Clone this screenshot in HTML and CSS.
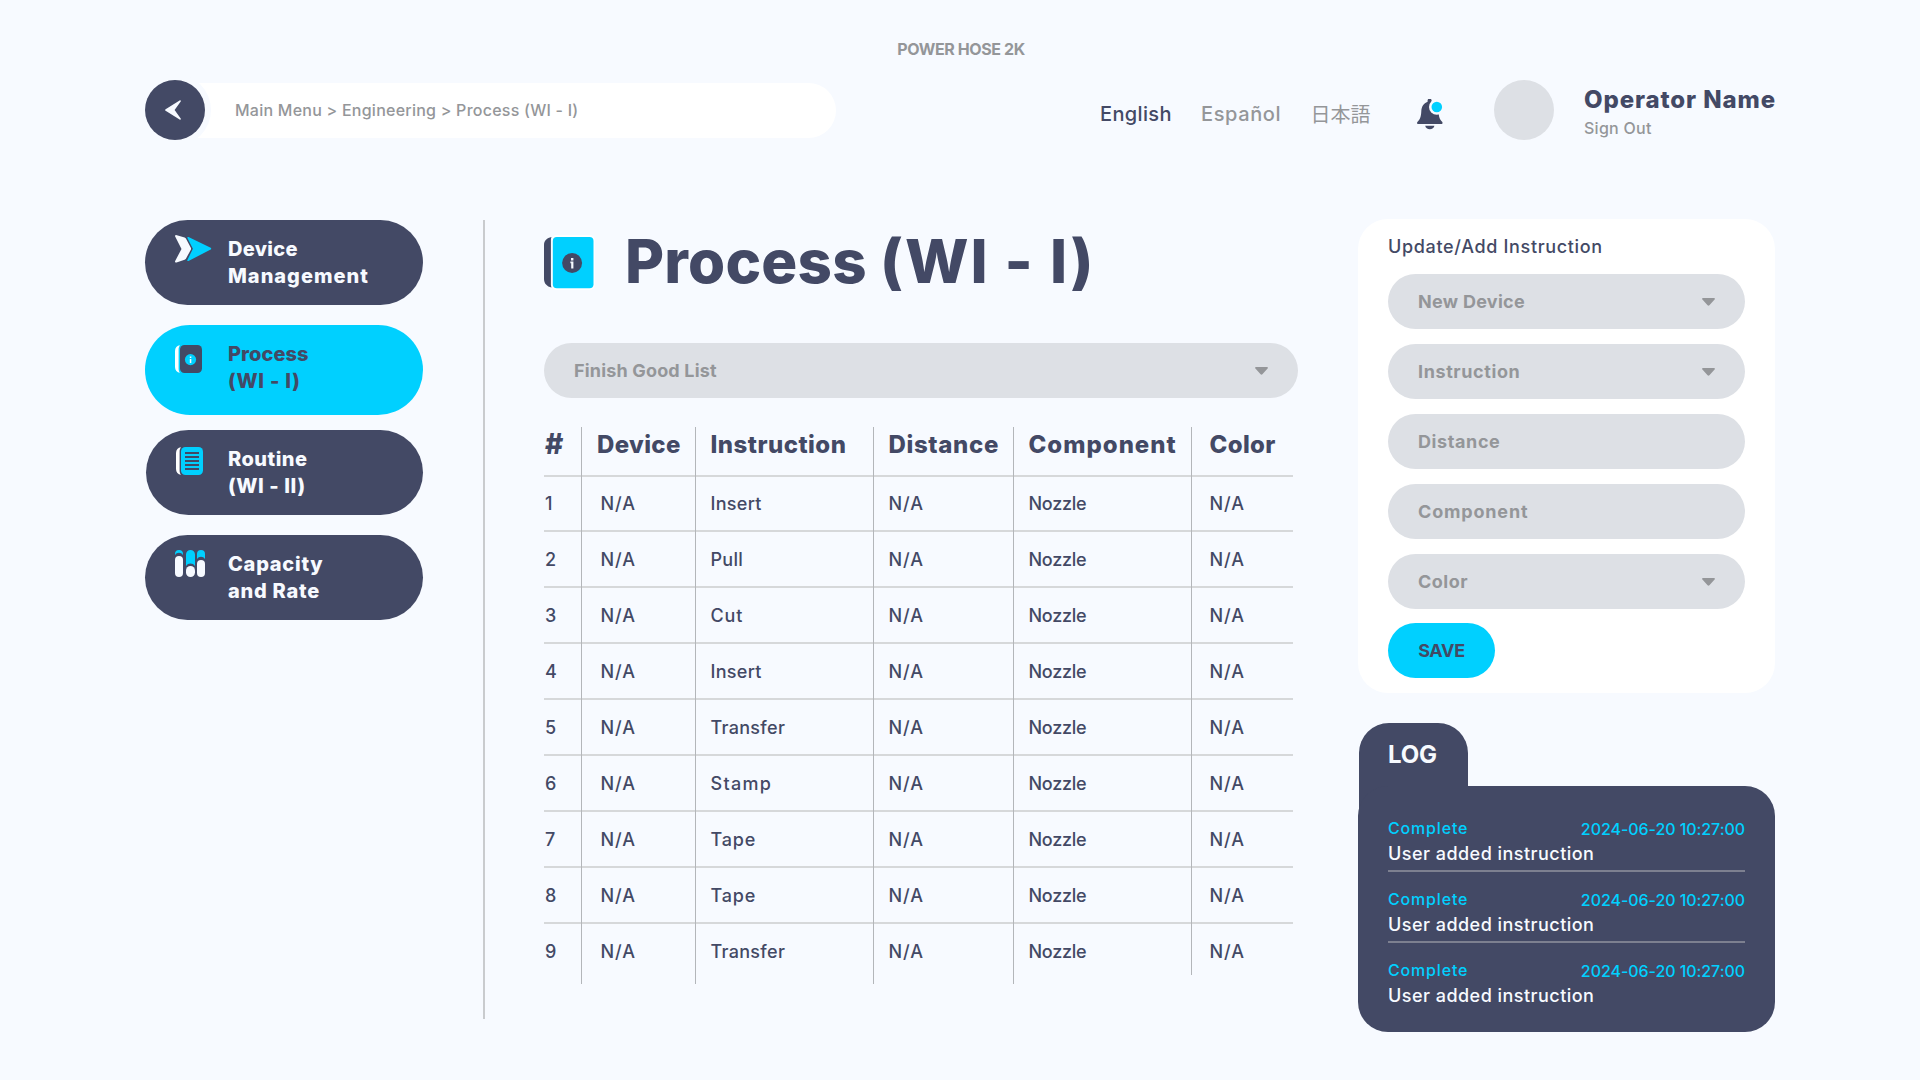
FILE: index.html
```html
<!DOCTYPE html>
<html lang="en">
<head>
<meta charset="utf-8">
<title>Power Hose 2K - Process (WI - I)</title>
<link rel="stylesheet" href="styles.css">
</head>
<body>
<svg class="defs" aria-hidden="true">
  <symbol id="caret" viewBox="0 0 13 8"><path d="M1 0h11c.9 0 1.200.9.6 1.600L7.400 7.300c-.5.6-1.300.6-1.800 0L.4 1.600C-.2.900.1 0 1 0z"/></symbol>
</svg>
<div class="brand">POWER HOSE 2K</div>
<header class="header">
  <nav class="crumbs">
    <a class="back"><svg width="16" height="20" viewBox="0 0 16 20"><path d="M14.600.4c.9-.6 1.600.3 1.100 1.100L9.600 10l6.100 8.500c.5.800-.2 1.700-1.100 1.100L.6 10.800c-.7-.5-.7-1.100 0-1.600z"/></svg></a>
    <div class="trail">Main Menu &gt; Engineering &gt; Process (WI - I)</div>
  </nav>
  <div class="langs">
    <a class="lang on">English</a>
    <a class="lang es">Español</a>
    <a class="lang ja" lang="ja">日本語</a>
  </div>
  <svg class="bell" width="26" height="32" viewBox="0 0 26 32">
    <path class="navy" d="M10.600 2.800V1.600a2 2 0 0 1 4 0V3.200c4.200 1.200 6.600 4.600 6.900 9 .3 5.400 1 8 3.600 10.600.8.900.5 2.200-.8 2.200H1.200C0 25-.3 23.700.6 22.800 3.200 20.200 4 17.600 4.300 12.200c.3-4.400 2.300-8 6.300-9.400z"/>
    <path class="navy" d="M8.200 26.700h9.200c-.4 2.200-2.200 3.500-4.600 3.500s-4.200-1.300-4.600-3.500z"/>
    <circle class="ground" cx="19.800" cy="8" r="7.800"/>
    <circle class="cyan" cx="19.800" cy="8" r="5.300"/>
  </svg>
  <div class="avatar"></div>
  <div class="user">
    <div class="user-name">Operator Name</div>
    <a class="sign-out">Sign Out</a>
  </div>
</header>

<div class="layout">
  <aside class="menu">
    <a class="item">
      <svg class="icon" width="37" height="28" viewBox="0 0 37 28"><path class="ground" d="M1 0l8.600 2.400c.7.200 1 .5 1.300 1l4.800 9c.5.9.5 1.600 0 2.500l-4.800 8.800c-.3.500-.6.800-1.300 1L1.500 27.500c-1.300.3-1.900-.7-1.200-1.800L6.500 14 .3 1.800C-.2.800.100 0 1 0z"/><path class="cyan" d="M13.500 2l22.200 10.800c.7.400.7 1.300 0 1.700L13.500 26c-.9.400-1.500-.3-1.100-1.100L17.900 13.700 12.400 3.100c-.4-.8.2-1.500 1.100-1.100z"/></svg>
      <span class="label"><span class="t2">Device</span><br><span class="t9">Management</span></span>
    </a>
    <a class="item active">
      <svg class="icon" width="28" height="28" viewBox="0 0 28 28"><path class="white" d="M5 .2C2 .6 0 2.500 0 6v16c0 3.500 2 5.400 5 5.800-.9-1.100-1.400-2.500-1.400-4.300v-19C3.600 2.700 4.100 1.300 5 .2z"/><rect class="navy" x="5" width="22" height="28" rx="4.500"/><circle class="cyan" cx="15.500" cy="14.600" r="5.600"/><path class="ground" d="M14.800 11.600h1.500v1.400h-1.500zM14.800 13.900h1.500V18h-1.500z"/></svg>
      <span class="label"><span class="t0">Process</span><br><span class="t7">(WI - I)</span></span>
    </a>
    <a class="item routine">
      <svg class="icon" width="28" height="28" viewBox="0 0 28 28"><path class="white" d="M5 .2C2 .6 0 2.500 0 6v16c0 3.500 2 5.400 5 5.800-.9-1.100-1.400-2.500-1.400-4.300v-19C3.600 2.700 4.100 1.300 5 .2z"/><rect class="cyan" x="5" width="22" height="28" rx="4.500"/><path class="navy" d="M9 5h14v2H9zM9 9h14v2H9zM9 13h14v2H9zM9 17h14v2H9zM9 21h14v2H9z"/></svg>
      <span class="label"><span class="t5">Routine</span><br><span class="t6">(WI - II)</span></span>
    </a>
    <a class="item">
      <svg class="icon" width="30" height="27" viewBox="0 0 30 27"><path class="cyan" d="M0 5V4a4 4 0 0 1 8 0v1a4.800 4.800 0 0 0-8 0zM11 16V4.500a4.500 4.500 0 0 1 9 0V16a5.400 5.400 0 0 0-9 0zM22 9V4a4 4 0 0 1 8 0v5a4.800 4.800 0 0 0-8 0z"/><rect class="ground" y="6" width="8" height="21" rx="4"/><rect class="ground" x="11" y="16" width="9" height="11" rx="4.500"/><rect class="ground" x="22" y="10" width="8" height="17" rx="4"/></svg>
      <span class="label"><span class="t7">Capacity</span><br><span class="t7">and Rate</span></span>
    </a>
  </aside>

  <main class="content">
    <div class="heading">
      <svg class="heading-icon" width="52" height="56" viewBox="0 0 52 56"><path class="navy" d="M7.500 3C3 4 0 6.500 0 11v34c0 4.500 3 7.500 7.500 8.500-.4-.9-.6-1.800-.6-2.700V5.700c0-.9.200-1.800.6-2.700z"/><rect class="white" x="7.600" y="1" width="43.200" height="55" rx="5"/><rect class="cyan" x="8.800" y="3" width="40.700" height="51.200" rx="4"/><circle class="navy" cx="28.100" cy="29" r="10"/><path class="ground" d="M27 24h2.400v2.400H27zM26.400 27.500h3v7h-2.200v-5.300h-.8z"/></svg>
      <h1 class="title">Process <span class="code">(WI - I)</span></h1>
    </div>
    <div class="field wide t1"><span>Finish Good List</span><svg class="caret"><use href="#caret"/></svg></div>
    <div class="table">
      <div class="row head"><div class="cell hash">#</div><div class="cell t7">Device</div><div class="cell t8">Instruction</div><div class="cell t9">Distance</div><div class="cell t12">Component</div><div class="cell t7">Color</div></div>
      <div class="row first"><div class="cell">1</div><div class="cell na">N/A</div><div class="cell">Insert</div><div class="cell na">N/A</div><div class="cell noz">Nozzle</div><div class="cell na">N/A</div></div>
      <div class="row"><div class="cell">2</div><div class="cell na">N/A</div><div class="cell">Pull</div><div class="cell na">N/A</div><div class="cell noz">Nozzle</div><div class="cell na">N/A</div></div>
      <div class="row"><div class="cell">3</div><div class="cell na">N/A</div><div class="cell wide-word">Cut</div><div class="cell na">N/A</div><div class="cell noz">Nozzle</div><div class="cell na">N/A</div></div>
      <div class="row"><div class="cell">4</div><div class="cell na">N/A</div><div class="cell">Insert</div><div class="cell na">N/A</div><div class="cell noz">Nozzle</div><div class="cell na">N/A</div></div>
      <div class="row"><div class="cell">5</div><div class="cell na">N/A</div><div class="cell">Transfer</div><div class="cell na">N/A</div><div class="cell noz">Nozzle</div><div class="cell na">N/A</div></div>
      <div class="row"><div class="cell">6</div><div class="cell na">N/A</div><div class="cell widest-word">Stamp</div><div class="cell na">N/A</div><div class="cell noz">Nozzle</div><div class="cell na">N/A</div></div>
      <div class="row"><div class="cell">7</div><div class="cell na">N/A</div><div class="cell wide-word">Tape</div><div class="cell na">N/A</div><div class="cell noz">Nozzle</div><div class="cell na">N/A</div></div>
      <div class="row"><div class="cell">8</div><div class="cell na">N/A</div><div class="cell wide-word">Tape</div><div class="cell na">N/A</div><div class="cell noz">Nozzle</div><div class="cell na">N/A</div></div>
      <div class="row last"><div class="cell">9</div><div class="cell na">N/A</div><div class="cell">Transfer</div><div class="cell na">N/A</div><div class="cell noz">Nozzle</div><div class="cell na">N/A</div></div>
    </div>
  </main>

  <section class="side">
    <form class="card">
      <div class="card-title">Update/Add Instruction</div>
      <div class="fields">
        <div class="field t2"><span>New Device</span><svg class="caret"><use href="#caret"/></svg></div>
        <div class="field t6"><span>Instruction</span><svg class="caret"><use href="#caret"/></svg></div>
        <div class="field t6"><span>Distance</span></div>
        <div class="field t8"><span>Component</span></div>
        <div class="field t5"><span>Color</span><svg class="caret"><use href="#caret"/></svg></div>
      </div>
      <button class="save" type="button">SAVE</button>
    </form>
    <div class="log-tab">LOG</div>
    <div class="log">
      <div class="entry"><div class="meta"><span class="status">Complete</span><span class="time">2024-06-20 10:27:00</span></div><div class="message">User added instruction</div></div>
      <div class="entry"><div class="meta"><span class="status">Complete</span><span class="time">2024-06-20 10:27:00</span></div><div class="message">User added instruction</div></div>
      <div class="entry"><div class="meta"><span class="status">Complete</span><span class="time">2024-06-20 10:27:00</span></div><div class="message">User added instruction</div></div>
    </div>
  </section>
</div>
</body>
</html>
```
FILE: styles.css
```css
:root {
  --ground: #f7faff;
  --navy: #434965;
  --cyan: #00d0ff;
  --grey: #dde0e5;
  --muted: #949699;
}
* { box-sizing: border-box; }
body {
  margin: 0;
  width: 1920px;
  height: 1080px;
  overflow: hidden;
  padding-top: 39px;
  background: var(--ground);
  color: var(--navy);
  font-family: Inter, "Noto Sans CJK JP", sans-serif;
  font-weight: 500;
  font-size: 18px;
}
.defs { display: none; }
.navy { fill: var(--navy); }
.cyan { fill: var(--cyan); }
.ground { fill: var(--ground); }
.white { fill: #fff; }

.t0 { letter-spacing: .08px; }
.t1 { letter-spacing: .17px; }
.t2 { letter-spacing: .28px; }
.t5 { letter-spacing: .48px; }
.t6 { letter-spacing: .6px; }
.t7 { letter-spacing: .75px; }
.t8 { letter-spacing: .83px; }
.t9 { letter-spacing: 1px; }

.brand {
  height: 20px;
  padding-left: 2px;
  text-align: center;
  font-size: 16px;
  line-height: 20px;
  font-weight: 700;
  letter-spacing: -.4px;
  color: var(--muted);
}

/* header */
.header { display: flex; height: 60px; margin: 21px 0 79px; padding-left: 145px; }
.crumbs { display: flex; width: 691px; align-items: center; }
.back {
  position: relative;
  z-index: 1;
  display: flex;
  flex: none;
  align-items: center;
  justify-content: center;
  width: 60px;
  height: 60px;
  padding-right: 4px;
  border-radius: 50%;
  background: var(--navy);
  box-shadow: 0 0 0 6px var(--ground);
}
.back svg { fill: var(--ground); }
.trail {
  flex: 1;
  height: 55px;
  margin-left: -30px;
  padding-left: 60px;
  border-radius: 0 28px 28px 0;
  background: #fff;
  color: var(--muted);
  font-size: 16px;
  line-height: 55px;
  letter-spacing: .24px;
}
.langs { display: flex; width: 317px; margin-left: 264px; padding-top: 4px; font-size: 20px; line-height: 60px; }
.lang { width: 109.500px; color: var(--muted); letter-spacing: .6px; }
.lang.on { width: 101px; color: var(--navy); letter-spacing: .35px; }
.lang.ja { width: 106.500px; font-family: "Noto Sans CJK JP", sans-serif; font-weight: 400; letter-spacing: 0; }
.bell { flex: none; margin-top: 19px; }
.avatar { flex: none; width: 60px; height: 60px; margin: 0 30px 0 51px; border-radius: 50%; background: var(--grey); }
.user { padding-top: 4px; }
.user-name { font-size: 24px; line-height: 31px; font-weight: 800; letter-spacing: .9px; white-space: nowrap; }
.sign-out { display: block; font-size: 16px; line-height: 26px; color: var(--muted); letter-spacing: .28px; }

.layout { display: flex; padding-left: 145px; }

/* sidebar */
.menu { display: flex; flex-direction: column; width: 340px; height: 799px; margin: 1px 59px 0 0; padding-right: 60px; border-right: 2px solid #c9cbce; }
.item {
  display: flex;
  height: 85px;
  margin-bottom: 20px;
  padding: 15px 0 0 30px;
  border-radius: 45px;
  background: var(--navy);
  color: var(--ground);
  font-size: 20px;
  line-height: 27px;
  font-weight: 800;
}
.icon { flex: none; }
.label { flex: 1; margin: 1px 0 0 16px; }
.icon[width="28"] + .label { margin-left: 25px; }
.icon[width="30"] + .label { margin-left: 23px; }
.item.active { height: 90px; margin-bottom: 15px; background: var(--cyan); color: var(--navy); }
.active .icon { margin-top: 5px; }
.item.routine { margin-left: 1px; }
.routine .icon { margin-top: 2px; }
.routine .icon[width="28"] + .label { margin-left: 24px; }

/* content */
.content { width: 754px; }
.heading { display: flex; height: 124px; padding-top: 8px; }
.heading-icon { margin: 7px 29px 0 0; }
.title { margin: -1px 0 0; font-size: 60px; line-height: 70px; font-weight: 800; letter-spacing: .2px; white-space: nowrap; }
.title .code { letter-spacing: 1.95px; }
.field {
  display: flex;
  align-items: center;
  justify-content: space-between;
  height: 55px;
  padding: 0 30px;
  border-radius: 28px;
  background: var(--grey);
  color: var(--muted);
  font-weight: 700;
  line-height: 55px;
}
.caret { width: 13px; height: 8px; margin-top: 1px; fill: var(--muted); }

.table { width: 749px; margin-top: 29px; }
.row { display: grid; grid-template-columns: 37px 114px 178px 140px 178px 102px; height: 56px; line-height: 27px; }
.row.first { height: 55px; }
.row.last { height: 60px; }
.cell { padding: 14px 0 0 14.500px; border-left: 1px solid #b3b6ba; box-shadow: inset 0 -2px #d6d8da; letter-spacing: .3px; }
.first .cell { padding-top: 13px; }
.cell:nth-child(1) { padding-left: 1px; border-left: 0; }
.cell:nth-child(2) { padding-left: 18.500px; }
.cell:nth-child(6) { padding-left: 17.500px; }
.cell.na { letter-spacing: 1px; }
.cell.noz { letter-spacing: -.27px; }
.cell.wide-word { letter-spacing: .85px; }
.cell.widest-word { letter-spacing: 1.3px; }
.last .cell { box-shadow: none; }
.last .cell:nth-child(6) { height: 51px; }
.head { height: 50px; font-size: 24px; line-height: 35px; font-weight: 800; }
.head .cell { padding-top: 0; }
.head .cell:nth-child(2) { padding-left: 15px; }
.head .t7 { letter-spacing: .35px; }
.head .t8 { letter-spacing: .47px; }
.head .t9 { letter-spacing: .65px; }
.head .t12 { letter-spacing: 1px; }
.head .hash { font-size: 28px; }

/* right column */
.side { width: 417px; margin-left: 60px; }
.card { height: 474px; padding: 14px 30px 0; border-radius: 30px; background: #fff; }
.card-title { line-height: 27px; letter-spacing: .66px; }
.fields { display: flex; flex-direction: column; gap: 15px; margin: 14px 0; }
.save {
  display: block;
  width: 107px;
  height: 55px;
  padding: 0;
  border: 0;
  border-radius: 28px;
  background: var(--cyan);
  color: var(--navy);
  font: 700 18px/55px Inter, sans-serif;
  letter-spacing: -.3px;
}
.log-tab {
  width: 109px;
  height: 93px;
  margin: 30px 0 -30px .5px;
  padding-left: 29.500px;
  border-radius: 30px 30px 0 0;
  background: var(--navy);
  color: var(--ground);
  font-size: 24px;
  line-height: 63px;
  font-weight: 700;
  letter-spacing: -.2px;
}
.log { display: flex; flex-direction: column; gap: 15px; height: 246px; padding: 30px 30px 0; border-radius: 30px; background: var(--navy); }
.entry { height: 56px; border-bottom: 2px solid #7d8090; }
.entry:last-child { border: 0; }
.meta { display: flex; justify-content: space-between; height: 24px; font-size: 16px; line-height: 24px; color: var(--cyan); }
.status { letter-spacing: .83px; }
.time { line-height: 26px; letter-spacing: -.06px; }
.message { line-height: 27px; letter-spacing: .47px; color: var(--ground); }
```
